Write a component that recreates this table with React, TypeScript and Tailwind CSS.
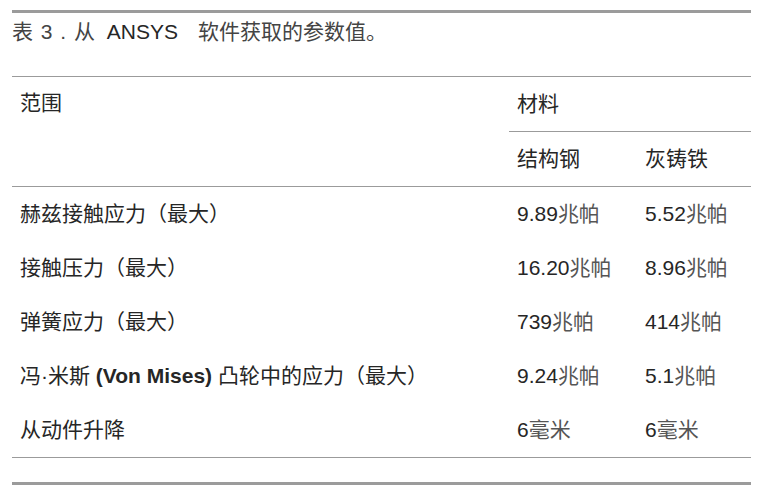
const rows: { label: React.ReactNode; steel: string; iron: string }[] = [
  { label: "赫兹接触应力（最大）", steel: "9.89", iron: "5.52" },
  { label: "接触压力（最大）", steel: "16.20", iron: "8.96" },
  { label: "弹簧应力（最大）", steel: "739", iron: "414" },
  {
    label: (
      <>
        冯·米斯 <span className="font-bold">(Von Mises)</span> 凸轮中的应力（最大）
      </>
    ),
    steel: "9.24",
    iron: "5.1",
  },
  { label: "从动件升降", steel: "6", iron: "6" },
];

function Value({ n, unit }: { n: string; unit: string }) {
  return (
    <span>
      {n}
      <span className="text-[#555]">{unit}</span>
    </span>
  );
}

export default function App() {
  return (
    <div
      className="min-h-[496px] bg-white pt-[10px] text-[21px] text-[#262626]"
      style={{ fontFamily: "'Liberation Sans', 'Noto Sans CJK SC', sans-serif" }}
    >
      <div className="ml-3 w-[739px]">
        <div className="border-t-[3px] border-[#9b9b9b]" />
        <div className="h-[63px] pt-[4px] leading-[30px] text-[#444]">
          <span className="[word-spacing:2px]">表 3 . 从 </span>
          <span className="ml-[4px] mr-[20px] text-[#262626]">ANSYS</span>软件获取的参数值。
        </div>

        <div className="border-t border-[#9b9b9b]">
          {/* header */}
          <div className="grid grid-cols-[497px_242px] border-b border-[#9b9b9b] leading-[30px]">
            <div className="pl-2 pt-[11px]">范围</div>
            <div>
              <div className="flex h-[55px] items-center border-b border-[#9b9b9b] pl-2">材料</div>
              <div className="grid h-[54px] grid-cols-[128px_114px] items-center">
                <div className="pl-2">结构钢</div>
                <div className="pl-2">灰铸铁</div>
              </div>
            </div>
          </div>

          {/* body */}
          {rows.map((r, i) => (
            <div
              key={i}
              className="grid h-[54px] grid-cols-[497px_128px_114px] items-center leading-[30px]"
            >
              <div className="pl-2">{r.label}</div>
              <div className="pl-2">
                <Value n={r.steel} unit={i === 4 ? "毫米" : "兆帕"} />
              </div>
              <div className="pl-2">
                <Value n={r.iron} unit={i === 4 ? "毫米" : "兆帕"} />
              </div>
            </div>
          ))}
          <div className="border-t border-[#9b9b9b]" />
        </div>

        <div className="mt-[24px] border-t-[3px] border-[#9b9b9b]" />
      </div>
    </div>
  );
}
